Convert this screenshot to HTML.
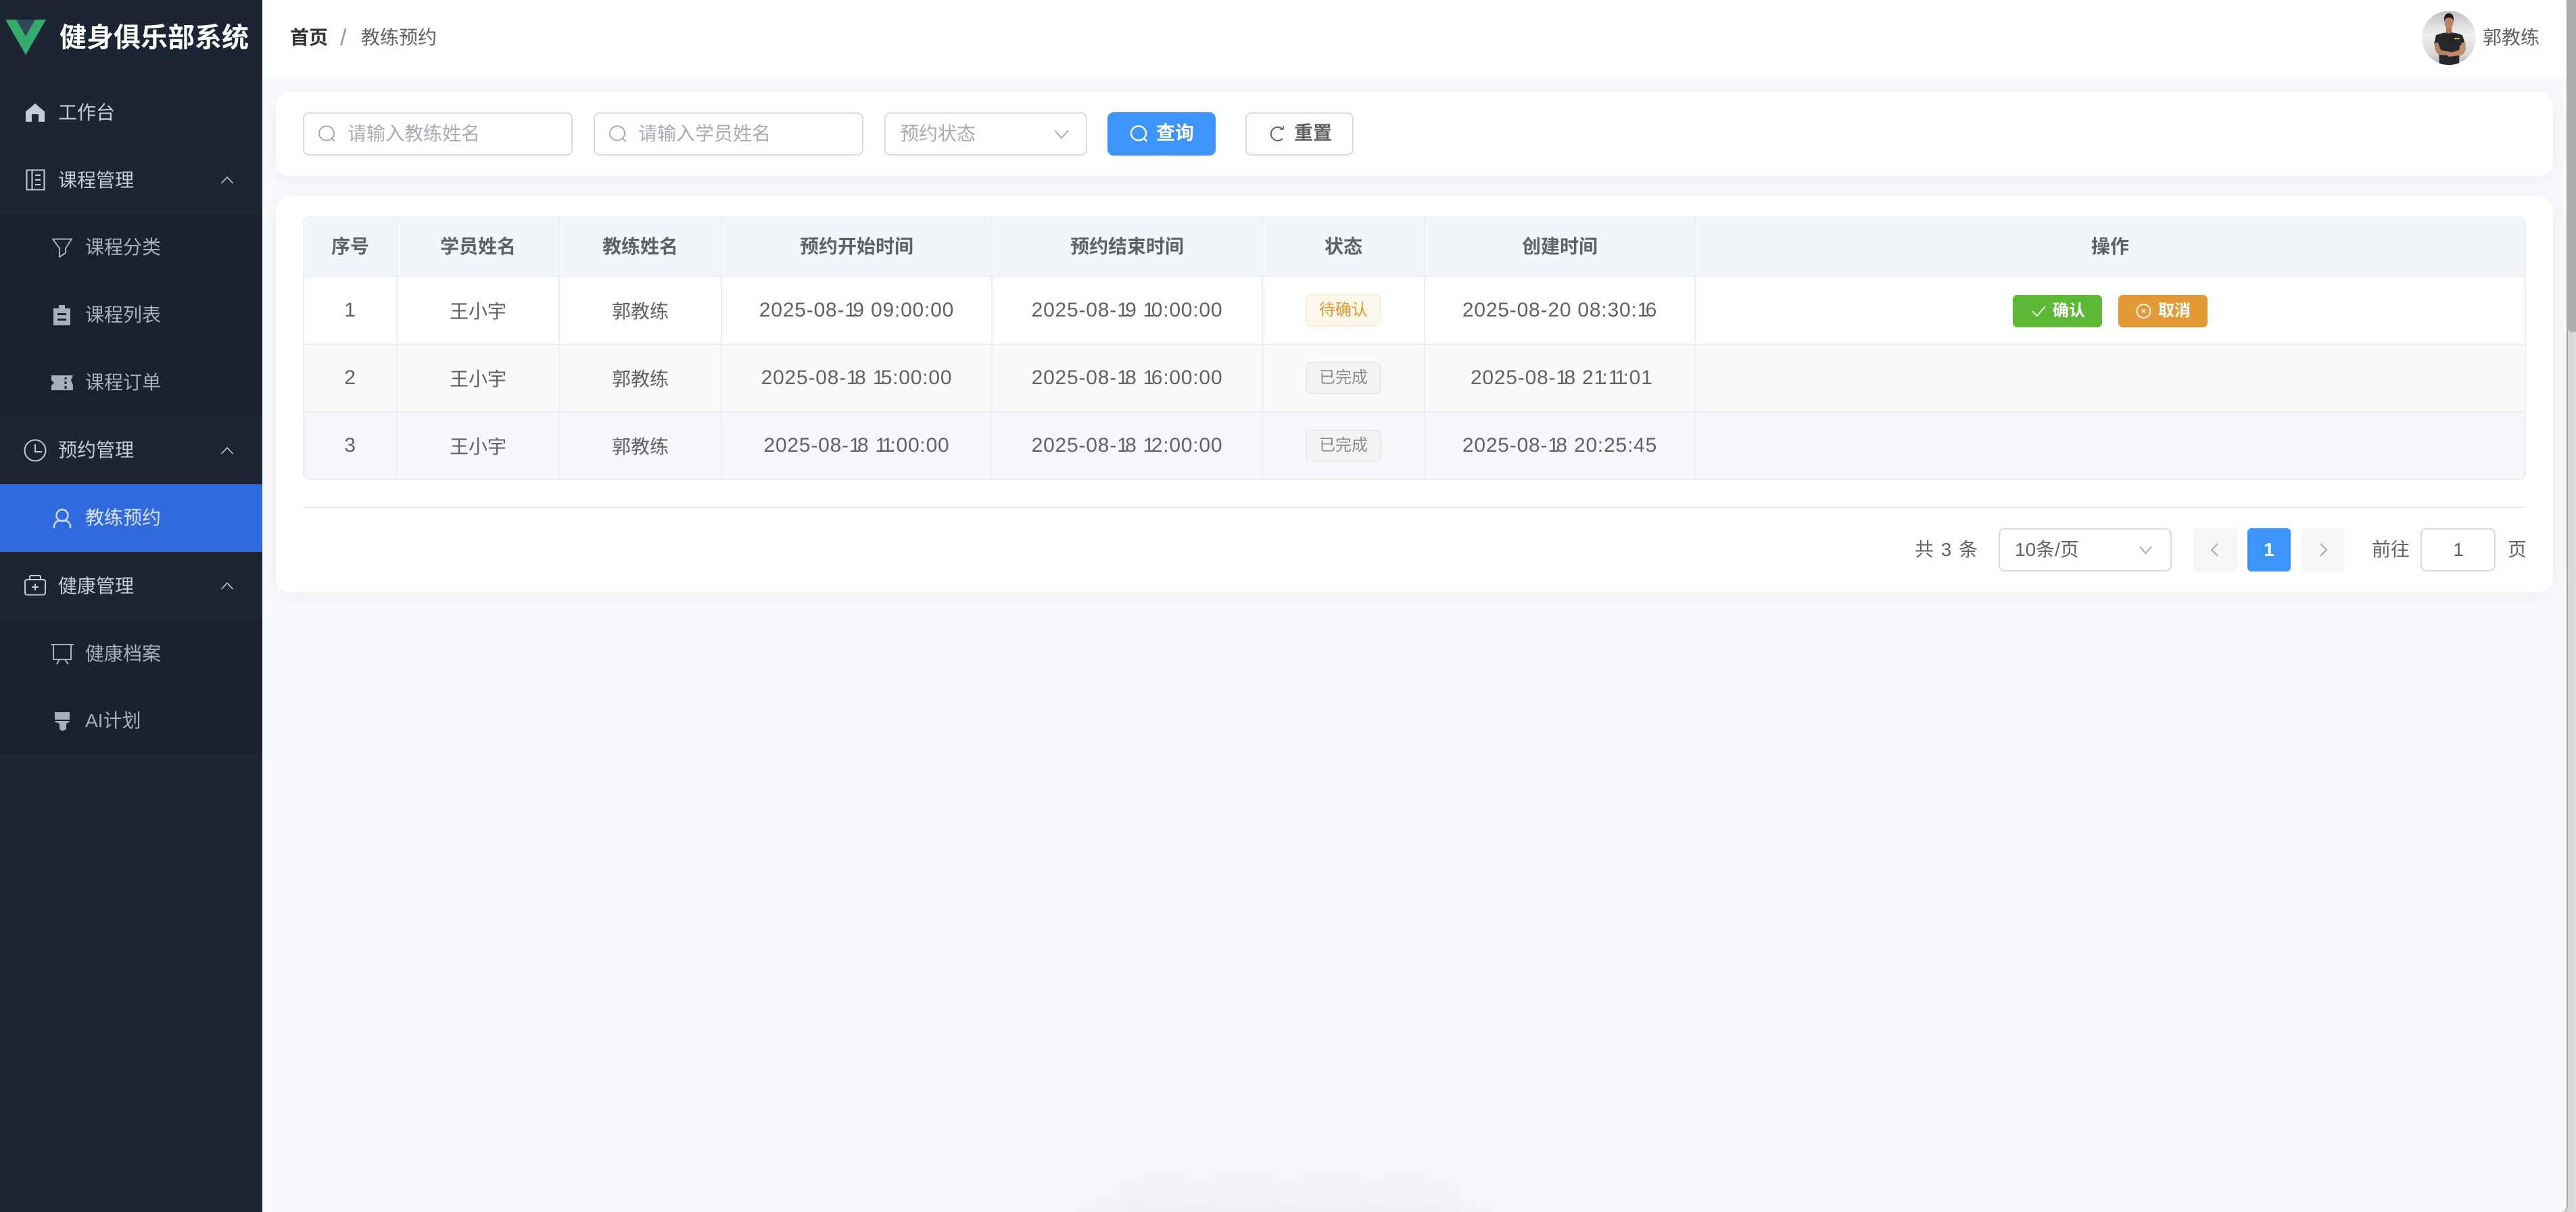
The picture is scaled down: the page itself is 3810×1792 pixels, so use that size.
<!DOCTYPE html>
<html lang="zh">
<head>
<meta charset="utf-8">
<title>健身俱乐部系统</title>
<style>
*{box-sizing:border-box;margin:0;padding:0}
html,body{width:3810px;height:1792px;overflow:hidden;background:#d2d2d2}
body{position:relative;font-family:"Liberation Sans","Noto Sans CJK SC",sans-serif;font-size:28px;color:#606266}
.abs{position:absolute}
.t{position:absolute;white-space:nowrap;line-height:40px;height:40px}
#track{left:3790px;top:0;width:20px;height:1792px;background:linear-gradient(90deg,#c8c8c8,#d4d4d4 40%,#dcdcdc)}
#thumb{left:3798px;top:0;width:12px;height:491px;background:#adafae;border-bottom-left-radius:6px}
#main{left:388px;top:0;width:3410px;height:1792px;background:#f8f9fd;border-right:2px solid #a9a9a9;border-bottom-right-radius:10px;overflow:hidden}
#blobclip{left:1440px;top:1690px;width:920px;height:102px;overflow:hidden}
#blob{position:absolute;left:170px;top:112px;width:580px;height:60px;box-shadow:0 0 150px rgba(0,0,0,.15)}
#side{left:0;top:0;width:388px;height:1792px;background:#1b2534}
.band{position:absolute;left:0;width:388px;height:100px}
.sub{background:#1a2230}
.mi{color:#c3ccd9}
.si{color:#a5afbd}
#head{left:388px;top:0;width:3408px;height:117px;background:#fff;box-shadow:0 4px 24px rgba(0,0,0,.025)}
.card{position:absolute;left:408px;width:3368px;background:#fff;border-radius:20px;box-shadow:0 5px 29px rgba(20,30,50,.05)}
.inp{position:absolute;top:166px;height:64px;border:2px solid #d8dae0;border-radius:9px;background:#fff}
.ph{color:#a8abb2}
.btn{position:absolute;top:166px;height:64px;border-radius:9px}
#tw{left:448px;top:320px;width:3288px;height:390px;border:2px solid #ebeef5;border-radius:10px;overflow:hidden;background:#fff}
table{border-collapse:separate;border-spacing:0;table-layout:fixed;width:3284px}
th,td{border-right:2px solid #ebeef5;border-bottom:2px solid #ebeef5;text-align:center;vertical-align:middle;padding:0;white-space:nowrap}
th:last-child,td:last-child{border-right:0}
th{height:88px;background:#f2f6f9;font-weight:700;font-size:28px;color:#606266;padding-bottom:4px}
td{height:100px;font-size:28px;color:#606266}
td.n{font-size:30px;letter-spacing:.8px}
td.n i{font-style:normal;letter-spacing:-4.7px}
tr.r2 td{background:#fafafa}
tr.r3 td{background:#f5f7fa;height:98px;border-bottom:0}
.tag{display:inline-block;width:112px;height:48px;line-height:44px;border-radius:8px;font-size:24px;letter-spacing:0;border:2px solid;vertical-align:middle}
.tag.w{background:#fdf6ec;border-color:#faecd8;color:#e19a30}
.tag.g{background:#f4f4f5;border-color:#e9e9eb;color:#888b90}
.ab{position:absolute;top:436px;height:48px;border-radius:7px}
.ab span{position:absolute;top:4px;line-height:40px;color:#fff;font-weight:700;font-size:24px;white-space:nowrap}
.pg{position:absolute;top:781px;height:64px;border-radius:6px;background:#f4f6f8}
</style>
</head>
<body>
<div id="track" class="abs"></div>
<div id="thumb" class="abs"></div>
<div id="main" class="abs"></div>
<div id="blobclip" class="abs"><div id="blob"></div></div>

<div id="side" class="abs">
  <div class="band sub" style="top:316px;height:300px"></div>
  <div class="band sub" style="top:916px;height:200px"></div>
  <div class="band" style="top:716px;background:#2f6bdf"></div>
  <div class="t" style="left:88px;top:36px;font-size:40px;font-weight:700;color:#fff;line-height:40px">健身俱乐部系统</div>
  <div class="t mi" style="left:86px;top:147px">工作台</div>
  <div class="t mi" style="left:86px;top:247px">课程管理</div>
  <div class="t si" style="left:126px;top:346px">课程分类</div>
  <div class="t si" style="left:126px;top:446px">课程列表</div>
  <div class="t si" style="left:126px;top:546px">课程订单</div>
  <div class="t mi" style="left:86px;top:646px">预约管理</div>
  <div class="t" style="left:126px;top:746px;color:#dbe3f2">教练预约</div>
  <div class="t mi" style="left:86px;top:847px">健康管理</div>
  <div class="t si" style="left:126px;top:947px">健康档案</div>
  <div class="t si" style="left:126px;top:1046px">AI计划</div>
</div>

<div id="head" class="abs">
  <div class="t" style="left:41px;top:36px;font-weight:700;color:#303133">首页</div>
  <div class="t" style="left:115px;top:36px;color:#999;font-size:34px">/</div>
  <div class="t" style="left:146px;top:36px;color:#606266">教练预约</div>
  <div class="t" style="left:3284px;top:36px;color:#606266">郭教练</div>
</div>

<div class="card" style="top:136px;height:124px"></div>
<div class="inp" style="left:448px;width:399px"></div>
<div class="t ph" style="left:514px;top:178px">请输入教练姓名</div>
<div class="inp" style="left:878px;width:399px"></div>
<div class="t ph" style="left:944px;top:178px">请输入学员姓名</div>
<div class="inp" style="left:1308px;width:300px"></div>
<div class="t ph" style="left:1331px;top:178px">预约状态</div>
<div class="btn" style="left:1638px;width:160px;background:#3d94fb"></div>
<div class="t" style="left:1710px;top:177px;color:#fff;font-weight:700">查询</div>
<div class="btn" style="left:1842px;width:160px;background:#fff;border:2px solid #d8dae0"></div>
<div class="t" style="left:1914px;top:177px;font-weight:700;color:#606266">重置</div>

<div class="card" style="top:290px;height:585px"></div>
<div id="tw" class="abs">
<table>
<colgroup><col style="width:138px"><col style="width:240px"><col style="width:240px"><col style="width:400px"><col style="width:400px"><col style="width:240px"><col style="width:400px"><col style="width:1226px"></colgroup>
<tr><th>序号</th><th>学员姓名</th><th>教练姓名</th><th>预约开始时间</th><th>预约结束时间</th><th>状态</th><th>创建时间</th><th>操作</th></tr>
<tr class="r1"><td class="n">1</td><td>王小宇</td><td>郭教练</td><td class="n">2025-08-<i>1</i>9 09:00:00</td><td class="n">2025-08-<i>1</i>9 <i>1</i>0:00:00</td><td><span class="tag w">待确认</span></td><td class="n">2025-08-20 08:30:<i>1</i>6</td><td></td></tr>
<tr class="r2"><td class="n">2</td><td>王小宇</td><td>郭教练</td><td class="n">2025-08-<i>1</i>8 <i>1</i>5:00:00</td><td class="n">2025-08-<i>1</i>8 <i>1</i>6:00:00</td><td><span class="tag g">已完成</span></td><td class="n">2025-08-<i>1</i>8 2<i>1</i>:<i>11</i>:0<i>1</i></td><td></td></tr>
<tr class="r3"><td class="n">3</td><td>王小宇</td><td>郭教练</td><td class="n">2025-08-<i>1</i>8 <i>11</i>:00:00</td><td class="n">2025-08-<i>1</i>8 <i>1</i>2:00:00</td><td><span class="tag g">已完成</span></td><td class="n">2025-08-<i>1</i>8 20:25:45</td><td></td></tr>
</table>
</div>
<div class="ab" style="left:2977px;width:132px;background:#5cb836"><span style="left:59px">确认</span></div>
<div class="ab" style="left:3133px;width:132px;background:#e39a36"><span style="left:59px">取消</span></div>

<div class="abs" style="left:448px;top:749px;width:3288px;height:2px;background:#ebeef5"></div>
<div class="t" style="left:2832px;top:793px;word-spacing:3px">共 3 条</div>
<div class="abs" style="left:2956px;top:781px;width:256px;height:64px;border:2px solid #d8dae0;border-radius:9px;background:#fff"></div>
<div class="t" style="left:2980px;top:793px">10条/页</div>
<div class="pg" style="left:3244px;width:65px"></div>
<div class="pg" style="left:3324px;width:64px;background:#3d94fb"></div>
<div class="t" style="left:3324px;top:793px;width:64px;text-align:center;color:#fff;font-weight:700">1</div>
<div class="pg" style="left:3404px;width:64px"></div>
<div class="t" style="left:3508px;top:793px">前往</div>
<div class="abs" style="left:3580px;top:781px;width:111px;height:64px;border:2px solid #d8dae0;border-radius:9px;background:#fff"></div>
<div class="t" style="left:3581px;top:793px;width:110px;text-align:center">1</div>
<div class="t" style="left:3709px;top:793px">页</div>

<svg class="abs" style="left:0;top:0" width="3810" height="1792" viewBox="0 0 3810 1792" fill="none">
  <defs>
    <clipPath id="av"><circle cx="3622" cy="56" r="40"/></clipPath>
    <linearGradient id="avbg" x1="0" y1="0" x2="0" y2="1"><stop offset="0" stop-color="#c2c2c2"/><stop offset=".45" stop-color="#f0f0f0"/><stop offset=".8" stop-color="#d8d8d8"/><stop offset="1" stop-color="#b4b4b4"/></linearGradient>
  </defs>
  <!-- logo -->
  <path d="M8 29H30L38 43L46 29H68L38 81Z" fill="#35ab6e"/>
  <path d="M24 29H52L38 54Z" fill="#31475c"/>
  <!-- home -->
  <path d="M52 153L66 165V180H57V169H47V180H38V165Z" fill="#c3ccd9"/>
  <!-- notebook -->
  <g stroke="#c3ccd9" stroke-width="2">
    <rect x="39.5" y="251.5" width="26" height="29"/>
    <path d="M47.5 252V280M52 259H60M52 266H60M52 273H60"/>
  </g>
  <!-- funnel -->
  <path d="M78 353.5H106L97 367V374L88 380V367Z" stroke="#a5afbd" stroke-width="2" stroke-linejoin="round"/>
  <!-- clipboard -->
  <path d="M79 456H87V451H96V456H104V481H79Z" fill="#a5afbd"/>
  <path d="M85 463H98V466H85ZM85 471H98V474H85Z" fill="#1a2230"/>
  <!-- ticket -->
  <path d="M76 555H108L105 562L108 570L108 577H76V570L80 566L76 562Z" fill="#a5afbd"/>
  <path d="M97 558V561M97 564V568M97 571V575" stroke="#1a2230" stroke-width="3"/>
  <!-- clock -->
  <circle cx="52" cy="666" r="15.5" stroke="#c3ccd9" stroke-width="2"/>
  <path d="M52 657V668H62" stroke="#c3ccd9" stroke-width="2"/>
  <!-- user -->
  <circle cx="92" cy="762" r="8.5" stroke="#d5ddec" stroke-width="2.4"/>
  <path d="M80 781V778A8 8 0 0 1 88 770H96A8 8 0 0 1 104 778V781" stroke="#d5ddec" stroke-width="2.4"/>
  <!-- first aid -->
  <rect x="37" y="857" width="30" height="22.5" rx="3" stroke="#c3ccd9" stroke-width="2"/>
  <path d="M44 857V853Q44 851 46 851H58Q60 851 60 853V857M47 868H57M52 863V873" stroke="#c3ccd9" stroke-width="2"/>
  <!-- presentation -->
  <path d="M75 953H109M79 953V975H105V953M88 975L84 982M96 975L101 982" stroke="#a5afbd" stroke-width="2"/>
  <!-- brush -->
  <path d="M81 1053H103V1067L98 1070V1078Q92 1083 88 1078V1070L81 1067Z" fill="#a5afbd"/>
  <path d="M81 1065H103" stroke="#1a2230" stroke-width="2"/>
  <!-- menu arrows -->
  <g stroke="#c3ccd9" stroke-width="1.6">
    <path d="M327.5 271L336 262L344.5 271"/>
    <path d="M327.5 671L336 662L344.5 671"/>
    <path d="M327.5 871L336 862L344.5 871"/>
  </g>
  <!-- search icons -->
  <g stroke="#a8abb2" stroke-width="2">
    <ellipse cx="483" cy="197" rx="11" ry="10.5"/><path d="M491 205L495.5 209"/>
    <ellipse cx="913" cy="197" rx="11" ry="10.5"/><path d="M921 205L925.5 209"/>
    <path d="M1560 193L1570 204L1580 193"/>
    <path d="M3165 808L3173.5 818L3182 808"/>
    <path d="M3280 804L3271 813L3280 822"/>
    <path d="M3432 804L3441 813L3432 822"/>
  </g>
  <g stroke="#fff" stroke-width="2.4">
    <ellipse cx="1684" cy="197" rx="11" ry="10.5"/><path d="M1692 205L1696.5 209"/>
  </g>
  <path d="M1897 191A10 10 0 1 0 1897 205" stroke="#606266" stroke-width="2"/>
  <path d="M1893 191H1898V186" stroke="#606266" stroke-width="1.6"/>
  <!-- table btn icons -->
  <path d="M3006 460L3013 467L3025 453" stroke="#fff" stroke-width="1.8"/>
  <circle cx="3170.5" cy="460" r="10" stroke="#fff" stroke-width="1.8"/>
  <path d="M3168 457.5L3173 462.5M3173 457.5L3168 462.5" stroke="#fff" stroke-width="1.5"/>
  <!-- avatar -->
  <g clip-path="url(#av)">
    <rect x="3582" y="16" width="80" height="80" fill="url(#avbg)"/>
    <path d="M3603 52Q3622 44 3642 52L3646 65L3638 68L3637 96H3608L3607 68L3600 65Z" fill="#27282b"/>
    <path d="M3618 40H3626V48L3622 50L3618 48Z" fill="#a9795c"/>
    <ellipse cx="3622" cy="33" rx="6.5" ry="9.5" fill="#b98468"/>
    <path d="M3615 32Q3614 20 3622 19.5Q3630 20 3629 32Q3628 26 3622 26Q3616 26 3615 32Z" fill="#17181a"/>
    <path d="M3601 63L3606 63L3610 74L3630 78L3626 82L3607 81Q3600 76 3601 63Z" fill="#b5835f"/>
    <path d="M3646 63L3641 63L3637 74L3618 80L3622 84L3642 81Q3649 76 3646 63Z" fill="#c08c69"/>
    <rect x="3630" y="56" width="8" height="2" fill="#b7c62e"/>
  </g>
</svg>
</body>
</html>
